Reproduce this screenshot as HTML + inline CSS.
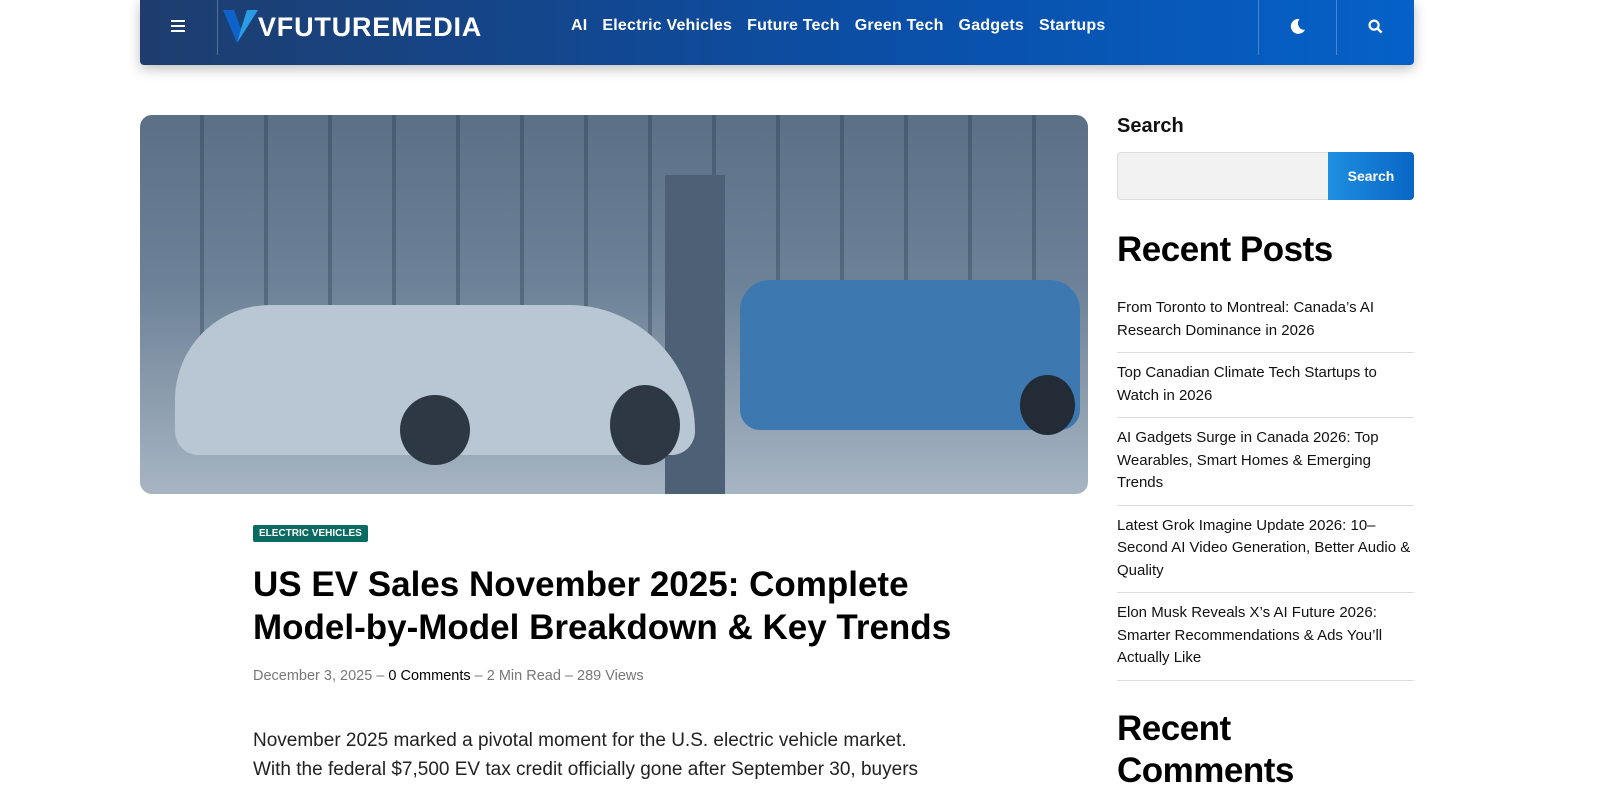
<!DOCTYPE html>
<html><head><meta charset="utf-8"><style>
*{box-sizing:border-box;margin:0;padding:0}
body{width:1600px;height:800px;overflow:hidden;background:#fff;font-family:"Liberation Sans",sans-serif;color:#000}
.hdr{position:absolute;left:140px;top:0;width:1274px;height:65px;background:linear-gradient(90deg,#1e3d6e,#0a4fa8 60%,#0561c8);border-radius:0 0 4px 4px;box-shadow:0 4px 12px rgba(0,0,0,.25);color:#fff}
.hdr .sep{position:absolute;top:0;height:55px;width:1px;background:rgba(255,255,255,.25)}
.nav{position:absolute;left:431px;top:17px;font-weight:bold;font-size:16px;letter-spacing:.2px}
.nav span{margin-right:15px}
.img{position:absolute;left:140px;top:115px;width:948px;height:379px;border-radius:12px;overflow:hidden;background:linear-gradient(180deg,#5b6f86 0%,#6d8298 45%,#8294a6 65%,#a7b5c3 100%)}
.tag{position:absolute;left:253px;top:525px;background:#0b6b62;color:#fff;font-size:10px;font-weight:bold;padding:3px 6px;border-radius:2px}
h1{position:absolute;left:253px;top:563px;width:720px;font-size:35px;line-height:43px;font-weight:bold;letter-spacing:0}
.meta{position:absolute;left:253px;top:668px;font-size:14.5px;color:#777}
.meta b{color:#000;font-weight:normal}
.body{position:absolute;left:253px;top:726px;font-size:19px;line-height:29px;color:#222;width:690px}
.side{position:absolute;left:1117px;width:297px}
.rp{font-size:15px;line-height:22.5px;color:#111;border-bottom:1px solid #ddd;padding:9px 0 10px}
</style></head><body>
<div class="hdr">
<div style="position:absolute;left:31px;top:20px;width:14px">
<div style="height:2px;background:#fff;margin-bottom:3px"></div><div style="height:2px;background:#fff;margin-bottom:3px"></div><div style="height:2px;background:#fff"></div></div>
<div class="sep" style="left:77px"></div>
<svg style="position:absolute;left:83px;top:9px" width="36" height="36" viewBox="0 0 36 36"><path d="M0 1h11l7 19 L14 34z" fill="#0d63c9"/><path d="M18 20L24 1h11L14 34z" fill="#2b9be6"/></svg>
<div style="position:absolute;left:118px;top:12px;font-size:27px;font-weight:bold;letter-spacing:.8px">VFUTUREMEDIA</div>
<div class="nav"><span>AI</span><span>Electric Vehicles</span><span>Future Tech</span><span>Green Tech</span><span>Gadgets</span><span>Startups</span></div>
<div class="sep" style="left:1118px"></div><div class="sep" style="left:1196px"></div>
<svg style="position:absolute;left:1149px;top:18px" width="17" height="17" viewBox="0 0 16 16"><path d="M10 1a7 7 0 1 0 5 10A6 6 0 0 1 10 1z" fill="#fff"/></svg>
<svg style="position:absolute;left:1228px;top:19px" width="15" height="15" viewBox="0 0 16 16"><circle cx="6.5" cy="6.5" r="4.8" stroke="#fff" stroke-width="2.4" fill="none"/><path d="M10 10l4.5 4.5" stroke="#fff" stroke-width="2.6"/></svg>
</div>
<div class="img">
<div style="position:absolute;left:0;top:0;width:100%;height:60%;background:repeating-linear-gradient(90deg,transparent 0 60px,rgba(40,55,75,.35) 60px 64px)"></div>
<div style="position:absolute;left:525px;top:60px;width:60px;height:319px;background:#4d6075"></div>
<div style="position:absolute;left:35px;top:190px;width:520px;height:150px;background:#b9c6d4;border-radius:120px 160px 30px 30px"></div>
<div style="position:absolute;left:600px;top:165px;width:340px;height:150px;background:#3e78b0;border-radius:30px 30px 20px 20px"></div>
<div style="position:absolute;left:260px;top:280px;width:70px;height:70px;background:#2e3845;border-radius:50%"></div>
<div style="position:absolute;left:470px;top:270px;width:70px;height:80px;background:#2e3845;border-radius:50%"></div>
<div style="position:absolute;left:880px;top:260px;width:55px;height:60px;background:#222b36;border-radius:50%"></div>
</div>
<div class="tag">ELECTRIC VEHICLES</div>
<h1>US EV Sales November 2025: Complete Model-by-Model Breakdown &amp; Key Trends</h1>
<div class="meta">December 3, 2025 – <b>0 Comments</b> – 2 Min Read – 289 Views</div>
<div class="body">November 2025 marked a pivotal moment for the U.S. electric vehicle market. With the federal $7,500 EV tax credit officially gone after September 30, buyers</div>
<div class="side" style="top:115px;font-size:20px;font-weight:bold;color:#111">Search</div>
<div class="side" style="top:152px;height:48px;background:#f2f2f2;border:1px solid #ddd;border-radius:4px"></div>
<div style="position:absolute;left:1328px;top:152px;width:86px;height:48px;background:linear-gradient(90deg,#1f8fe0,#0866c6);border-radius:0 4px 4px 0;color:#fff;font-weight:bold;font-size:14px;text-align:center;line-height:48px">Search</div>
<div class="side" style="top:230px;font-size:35px;font-weight:bold;letter-spacing:-.5px">Recent Posts</div>
<div class="side" style="top:288px">
<div class="rp">From Toronto to Montreal: Canada’s AI Research Dominance in 2026</div>
<div class="rp">Top Canadian Climate Tech Startups to Watch in 2026</div>
<div class="rp">AI Gadgets Surge in Canada 2026: Top Wearables, Smart Homes &amp; Emerging Trends</div>
<div class="rp">Latest Grok Imagine Update 2026: 10–Second AI Video Generation, Better Audio &amp; Quality</div>
<div class="rp">Elon Musk Reveals X’s AI Future 2026: Smarter Recommendations &amp; Ads You’ll Actually Like</div>
</div>
<div class="side" style="top:708px;font-size:35px;font-weight:bold;line-height:42px;letter-spacing:-.5px">Recent<br>Comments</div>
</body></html>
